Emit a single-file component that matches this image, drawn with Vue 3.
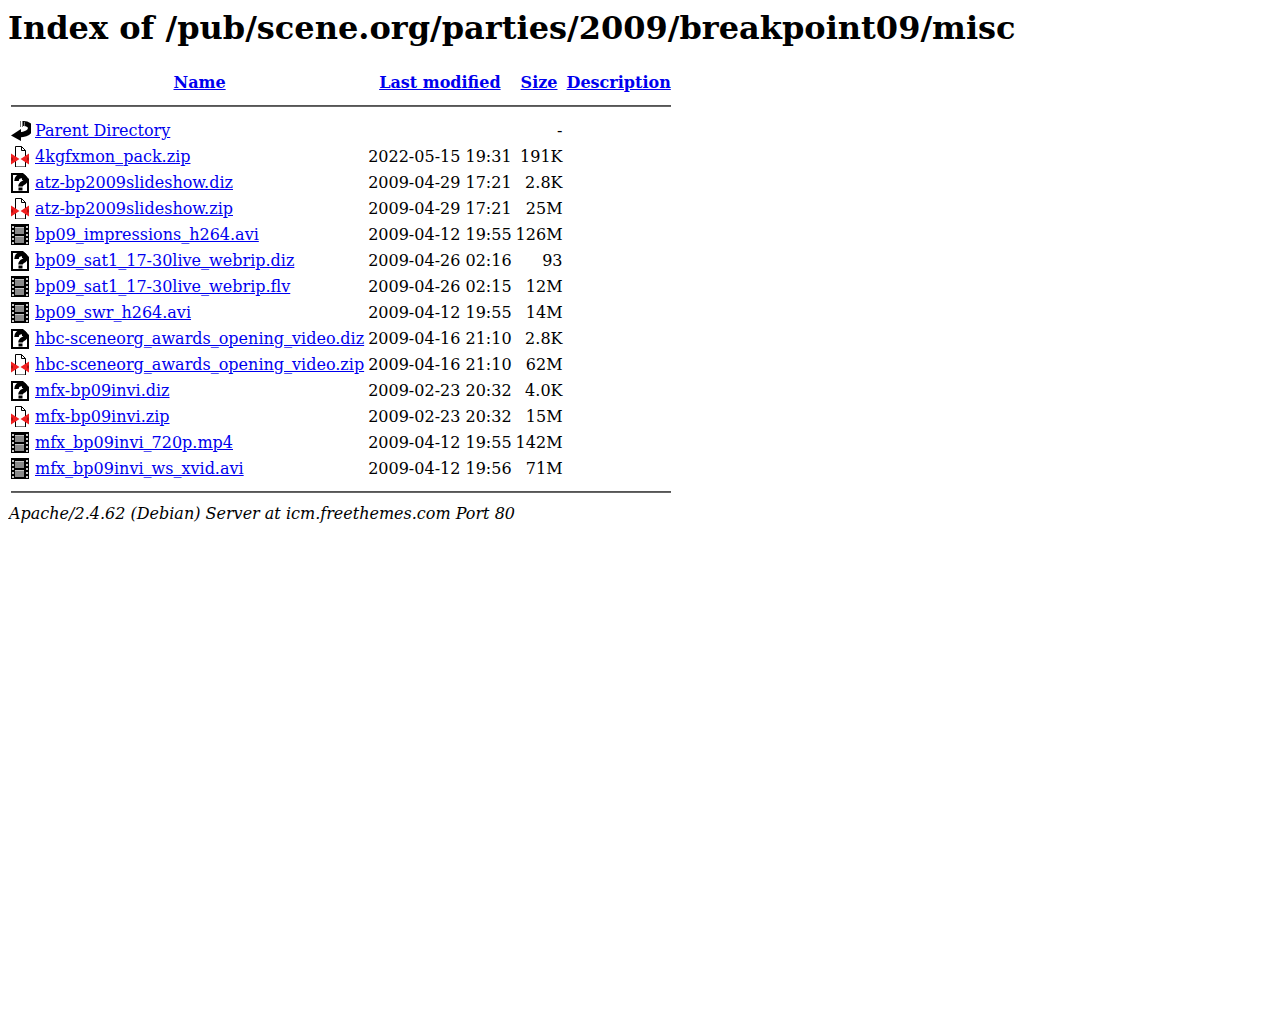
<script setup>
const files = [
  { name: 'Parent Directory', date: '', size: '-', icon: 'back' },
  { name: '4kgfxmon_pack.zip', date: '2022-05-15 19:31', size: '191K', icon: 'zip' },
  { name: 'atz-bp2009slideshow.diz', date: '2009-04-29 17:21', size: '2.8K', icon: 'unknown' },
  { name: 'atz-bp2009slideshow.zip', date: '2009-04-29 17:21', size: '25M', icon: 'zip' },
  { name: 'bp09_impressions_h264.avi', date: '2009-04-12 19:55', size: '126M', icon: 'movie' },
  { name: 'bp09_sat1_17-30live_webrip.diz', date: '2009-04-26 02:16', size: '93', icon: 'unknown' },
  { name: 'bp09_sat1_17-30live_webrip.flv', date: '2009-04-26 02:15', size: '12M', icon: 'movie' },
  { name: 'bp09_swr_h264.avi', date: '2009-04-12 19:55', size: '14M', icon: 'movie' },
  { name: 'hbc-sceneorg_awards_opening_video.diz', date: '2009-04-16 21:10', size: '2.8K', icon: 'unknown' },
  { name: 'hbc-sceneorg_awards_opening_video.zip', date: '2009-04-16 21:10', size: '62M', icon: 'zip' },
  { name: 'mfx-bp09invi.diz', date: '2009-02-23 20:32', size: '4.0K', icon: 'unknown' },
  { name: 'mfx-bp09invi.zip', date: '2009-02-23 20:32', size: '15M', icon: 'zip' },
  { name: 'mfx_bp09invi_720p.mp4', date: '2009-04-12 19:55', size: '142M', icon: 'movie' },
  { name: 'mfx_bp09invi_ws_xvid.avi', date: '2009-04-12 19:56', size: '71M', icon: 'movie' }
]
</script>

<template>
  <div class="page">
    <h1>Index of /pub/scene.org/parties/2009/breakpoint09/misc</h1>
    <table>
      <tbody>
        <tr>
          <th class="icon-cell"><span class="blank"></span></th>
          <th><a href="#">Name</a></th>
          <th><a href="#">Last modified</a></th>
          <th><a href="#">Size</a></th>
          <th><a href="#">Description</a></th>
        </tr>
        <tr><th colspan="5"><hr></th></tr>
        <tr v-for="file in files" :key="file.name">
          <td class="icon-cell">
            <svg class="icon" width="20" height="22" viewBox="0 0 20 22">
              <template v-if="file.icon === 'back'">
                <path d="M12 4.500C22 4 23 15 8 16" fill="none" stroke="#000" stroke-width="5" />
                <path d="M0 16.500L10 10V22z" fill="#000" />
                <path d="M9 2h1v6H9zM11 2h1v6h-1zM13 3h1v4h-1z" fill="#777" shape-rendering="crispEdges" />
              </template>
              <template v-else-if="file.icon === 'zip'">
                <path d="M4.500 1.500h6l4 4V22h-10z" fill="#fff" stroke="#000" />
                <path d="M10.500 1.500v4h4" fill="none" stroke="#000" />
                <path d="M0 8.500l8.500 5.500L0 19.500zM18 8.500L9.500 14l8.500 5.500z" fill="#f02020" />
                <path d="M0 12.500h2v3H0zM16 12.500h2v3h-2z" fill="#b01010" />
              </template>
              <template v-else-if="file.icon === 'unknown'">
                <path d="M0 2h12l6 6v14H0z" fill="#000" />
                <path d="M2 4h9v5h5v11H2z" fill="#fff" />
                <path d="M13 4.500L15.500 7H13z" fill="#fff" />
                <path d="M5.500 10C5.500 3.500 14.500 3.500 14.500 9C14.500 12.500 9.500 11.500 9.500 15.500" fill="none" stroke="#000" stroke-width="4.500" />
                <path d="M7.500 16.500h4v3h-4z" fill="#000" />
              </template>
              <template v-else>
                <path d="M0 1h18v21H0z" fill="#000" />
                <path d="M4 4h9v7H4zM4 13h9v7H4z" fill="#8a8a8a" />
                <path d="M4 4h9v1H4zM4 13h9v1H4z" fill="#c4c4c4" />
                <path d="M1 3h2v2H1zM1 7h2v2H1zM1 11h2v2H1zM1 15h2v2H1zM1 19h2v2H1zM15 3h2v2h-2zM15 7h2v2h-2zM15 11h2v2h-2zM15 15h2v2h-2zM15 19h2v2h-2z" fill="#ccc" />
              </template>
            </svg>
          </td>
          <td><a href="#">{{ file.name }}</a></td>
          <td class="right">{{ file.date }}</td>
          <td class="right">{{ file.size }}</td>
          <td>&nbsp;</td>
        </tr>
        <tr><th colspan="5"><hr></th></tr>
      </tbody>
    </table>
    <address>Apache/2.4.62 (Debian) Server at icm.freethemes.com Port 80</address>
  </div>
</template>

<style>
body {
  margin: 9px 8px 8px;
  background: #fff;
}
</style>

<style scoped>
.page {
  color: #000;
  font-family: "DejaVu Serif", serif;
  font-size: 16px;
}

h1 {
  margin: 0 0 0.67em;
  font-size: 2em;
  font-weight: 700;
}

table {
  border-spacing: 2px;
}

th,
td {
  padding: 1px;
}

.icon-cell {
  vertical-align: top;
}

.blank,
.icon {
  display: block;
  width: 20px;
  height: 22px;
}

.right {
  text-align: right;
}

a {
  color: #00e;
  text-decoration: underline;
}

hr {
  margin: 8px 0;
  border-style: solid;
  border-width: 1px 0;
  border-top-color: #555;
  border-bottom-color: #666;
}

address {
  padding-left: 1px;
  font-style: italic;
}
</style>
